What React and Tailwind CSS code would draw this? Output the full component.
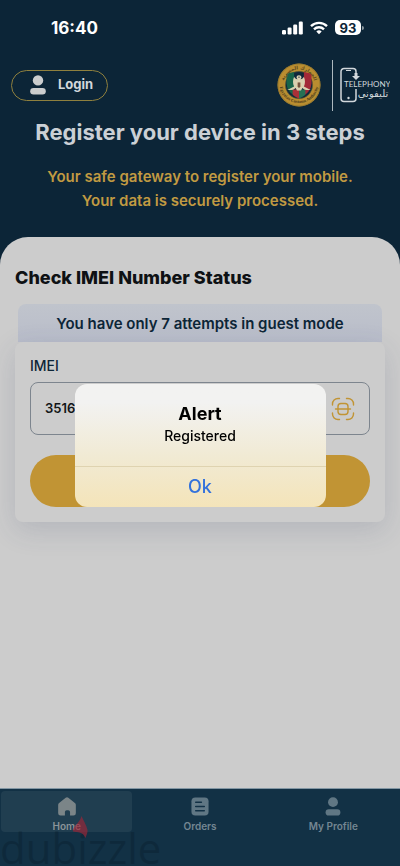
import React, { useState } from 'react';

const tabs = ['Home', 'Orders', 'My Profile'];

function PersonIcon({ className }) {
  return (
    <svg viewBox="0 0 16 20" className={className} fill="currentColor" aria-hidden="true">
      <circle cx="8" cy="5.4" r="5.2" />
      <rect x="0.2" y="13" width="15.6" height="6.6" rx="3.3" />
    </svg>
  );
}

function HomeIcon({ className }) {
  return (
    <svg viewBox="0 0 20 20" className={className} fill="currentColor" aria-hidden="true">
      <path d="M8.6 0.8a2.2 2.2 0 0 1 2.8 0l6.9 5.4c.6.5 1 1.2 1 2V17a2.5 2.5 0 0 1-2.5 2.5h-3.6v-3.7a1.9 1.9 0 0 0-1.9-1.9H9.7a1.9 1.9 0 0 0-1.9 1.9v3.7H3.2A2.5 2.5 0 0 1 .7 17V8.2c0-.8.4-1.5 1-2z" />
    </svg>
  );
}

function OrdersIcon({ className }) {
  return (
    <svg viewBox="0 0 20 20" className={className} aria-hidden="true">
      <rect x="1" y="0.5" width="18" height="19" rx="4" fill="currentColor" />
      <path d="M5.5 5.5h6M5.5 10h9M5.5 14.5h9" stroke="#123145" strokeWidth="1.6" strokeLinecap="round" />
    </svg>
  );
}

function ScanIcon() {
  return (
    <svg viewBox="0 0 24 24" className="size-6" fill="none" stroke="#c19434" strokeWidth="1.4" strokeLinecap="round" aria-hidden="true">
      <path d="M1.5 8V7A5.500 5.500 0 0 1 7 1.500h1.500M15.500 1.500H17A5.500 5.500 0 0 1 22.500 7v1M22.500 16v1a5.500 5.500 0 0 1-5.500 5.500h-1.500M8.500 22.500H7A5.500 5.500 0 0 1 1.500 17v-1" />
      <rect x="7" y="6.5" width="10" height="11" rx="3" />
      <path d="M4.5 12h15" />
    </svg>
  );
}

function Emblem() {
  return (
    <svg viewBox="0 0 90 90" className="size-11" role="img" aria-label="Egyptian Customs Authority">
      <defs>
        <path id="topArc" d="M13 45a32 32 0 0 1 64 0" />
        <path id="bottomArc" d="M5 42a40 40 0 0 0 80 0" />
        <clipPath id="shield">
          <path d="M19 22q26-8 52 0v20q-2 20-26 31Q21 62 19 42z" />
        </clipPath>
      </defs>
      <circle cx="45" cy="45" r="44" fill="#b98d30" />
      <circle cx="45" cy="45" r="43" fill="none" stroke="#8b732e" strokeWidth="1.5" />
      <circle cx="45" cy="45" r="28" fill="#10283b" stroke="#796a31" />
      <g clipPath="url(#shield)">
        <path d="M18 18h17v48H18z" fill="#176449" />
        <path d="M55 18h17v48H55z" fill="#a32938" />
        <path d="M32 54h13v22H32z" fill="#aa3038" />
        <path d="M45 54h13v22H45z" fill="#277154" />
      </g>
      <path d="M45 25c3 0 5 2 5 4s-1 3-2 4c4 0 6-3 7-5 3 7 3 14 0 20l14 7c-7 1-13 0-17-4l-3 5h-8l-3-5c-4 4-10 5-17 4l14-7c-3-6-3-13 0-20 1 2 3 5 7 5-1-1-2-2-2-4s2-4 5-4z" fill="#d9d0b0" />
      <path d="M42 40h6v8l-3 3-3-3z" fill="#9f6844" />
      <path d="M45 40v10M43 29h4" stroke="#26313a" strokeWidth="1.5" />
      <text fontSize="10" fontWeight="700" fill="#5e4b20" fontFamily="DejaVu Sans" textAnchor="middle">
        <textPath href="#topArc" startOffset="50%">الجمارك المصرية</textPath>
      </text>
      <text fontSize="9" fontWeight="700" fill="#493a1b" fontFamily="Liberation Serif" textAnchor="middle">
        <textPath href="#bottomArc" startOffset="50%">Egyptian Customs Authority</textPath>
      </text>
    </svg>
  );
}

function TelephonyLogo() {
  return (
    <svg viewBox="0 0 50 36" className="h-9 w-[50px]" fill="none" role="img" aria-label="Telephony">
      <g stroke="#d2d8dc" strokeWidth="1.5">
        <path d="M16 7V4.5A3 3 0 0 0 13 1.5H4A3 3 0 0 0 1 4.5v27a3 3 0 0 0 3 3h9a3 3 0 0 0 3-3V22" />
        <path d="M6 3.5h5" strokeWidth="1" />
      </g>
      <circle cx="8.5" cy="31" r="1.2" fill="#d2d8dc" />
      <path d="M14.5 6h3v3H20l-4 4-4-4h2.5z" fill="#d2d8dc" />
      <text x="4" y="20" fontSize="8" fill="#d2d8dc" fontFamily="Lato, sans-serif">TELEPHONY</text>
      <text x="33" y="30" fontSize="10" fill="#d2d8dc" fontFamily="DejaVu Sans, sans-serif" textAnchor="middle">تليفوني</text>
    </svg>
  );
}

function StatusBar() {
  return (
    <div className="flex h-14 items-center justify-between pr-9 pb-px pl-[51px] text-white">
      <span className="text-[17px] leading-6 font-bold">16:40</span>
      <div className="flex items-center gap-[7px]">
        <svg viewBox="0 0 21 14" className="h-3.5 w-[21px]" fill="currentColor" aria-hidden="true">
          <rect x="0" y="9" width="4" height="4.5" rx="1.2" />
          <rect x="5.6" y="6.5" width="4" height="7" rx="1.2" />
          <rect x="11.2" y="3.5" width="4" height="10" rx="1.2" />
          <rect x="16.8" y="0.5" width="4" height="13" rx="1.2" />
        </svg>
        <svg viewBox="0 0 18 14" className="h-3.5 w-[18px]" fill="none" stroke="currentColor" strokeWidth="2.4" aria-hidden="true">
          <path d="M1 5.1a11.5 11.5 0 0 1 16 0M4 8.3a7.2 7.2 0 0 1 10 0" />
          <path d="M6.3 10.5a4 4 0 0 1 5.4 0L9 13.3z" fill="currentColor" stroke="none" />
        </svg>
        <div className="flex items-center gap-px">
          <span className="flex h-[15px] w-[26px] items-center justify-center rounded-[5px] bg-white text-[13px] leading-4 font-bold text-[#0c2537]">93</span>
          <span className="h-1 w-0.5 rounded-r-full bg-[#8b989f]" />
        </div>
      </div>
    </div>
  );
}

function Alert({ onClose }) {
  return (
    <div className="fixed inset-0 flex items-center justify-center pt-6">
      <div role="alertdialog" aria-labelledby="alert-title" aria-describedby="alert-text" className="w-[251px] overflow-hidden rounded-xl bg-linear-to-b from-[#f2f2f1] from-15% via-[#f1ead3] via-60% to-[#f4e4b9] text-center text-black">
        <div className="flex h-[82px] flex-col items-center pt-[18px]">
          <h2 id="alert-title" className="text-[18px] leading-6 font-bold">Alert</h2>
          <p id="alert-text" className="text-[14px] leading-5 font-medium">Registered</p>
        </div>
        <button onClick={onClose} className="h-[41px] w-full border-t border-[#dfd3b0] text-[18px] leading-6 font-medium text-[#3372dc]">
          Ok
        </button>
      </div>
    </div>
  );
}

function App() {
  const [imei, setImei] = useState('3516');
  const [active, setActive] = useState('Home');
  const [showAlert, setShowAlert] = useState(true);

  return (
    <div className="relative flex min-h-screen flex-col overflow-hidden bg-[#0c2537] font-['Inter',sans-serif]">
      <StatusBar />

      <header className="flex flex-col">
        <div className="flex h-[58px] items-center justify-between pr-2.5 pl-[11px]">
          <button className="flex h-[31px] w-[97px] items-center justify-center gap-3 rounded-full border border-[#8f803e] pl-1 text-[13px] font-bold text-[#d2d8dc]">
            <PersonIcon className="h-5 w-4 text-[#cbcdce]" />
            Login
          </button>
          <div className="flex items-center gap-[11px]">
            <Emblem />
            <div className="flex items-center gap-[7px]">
              <span className="h-[51px] w-px bg-[#aeb9bf]" />
              <TelephonyLogo />
            </div>
          </div>
        </div>
        <h1 className="pt-1 text-center text-[22px] leading-7 font-bold text-[#cbd0d5]">Register your device in 3 steps</h1>
        <p className="pt-[19px] text-center text-[15px] leading-6 font-semibold text-[#c19a42]">
          Your safe gateway to register your mobile.
          <br />
          Your data is securely processed.
        </p>
      </header>

      <main className="mt-6 flex-1 rounded-t-[28px] bg-[#cccccc] px-[15px] pt-[27px]">
        <h2 className="text-[18px] leading-7 font-extrabold text-[#0e1114]">Check IMEI Number Status</h2>
        <p className="mx-[3px] mt-3 rounded-t-lg bg-linear-to-b from-[#c0c4cc] to-[#b9bdca] pt-2.5 pb-2 text-center text-[15px] leading-5 font-semibold text-[#0c2537]">
          You have only 7 attempts in guest mode
        </p>
        <form onSubmit={(e) => e.preventDefault()} className="rounded-lg bg-[#cccccc] px-[15px] pt-3 pb-[15px] shadow-[0_8px_28px_rgba(50,65,100,0.16)]">
          <label htmlFor="imei" className="block text-[14px] leading-6 font-medium text-[#0c2537]">IMEI</label>
          <div className="mt-1 flex h-[53px] items-center rounded-lg border border-[#7d858e] pr-3.5 pl-3.5">
            <input
              id="imei"
              value={imei}
              onChange={(e) => setImei(e.target.value)}
              className="min-w-0 flex-1 bg-transparent text-[13px] font-semibold text-[#111517] outline-none"
            />
            <button type="button" aria-label="Scan IMEI">
              <ScanIcon />
            </button>
          </div>
          <button type="submit" aria-label="Check" className="mt-5 block h-[52px] w-full rounded-full bg-[#c19434]" />
        </form>
      </main>

      <nav className="flex h-[78px] items-start border-t border-[#8296a3] bg-[#123145]">
        {tabs.map((tab) => (
          <button
            key={tab}
            onClick={() => setActive(tab)}
            className={`mx-px mt-0.5 flex h-[41px] flex-1 flex-col items-center rounded-sm pt-1.5 text-[10px] leading-3 font-semibold ${tab === active ? 'bg-[#203e50] text-[#8b9499]' : 'text-[#748692]'}`}
          >
            {tab === 'Home' && <HomeIcon className="size-5 text-[#7b8588]" />}
            {tab === 'Orders' && <OrdersIcon className="size-5 text-[#607784]" />}
            {tab === 'My Profile' && <PersonIcon className="h-5 w-4 text-[#607784]" />}
            <span className="mt-1">{tab}</span>
          </button>
        ))}
      </nav>

      <div className="pointer-events-none absolute bottom-0 left-0">
        <span className="block h-9 font-['Open_Sans',sans-serif] text-[42px] leading-9 font-medium text-[#0b2232]/50">dubizzle</span>
        <svg viewBox="0 0 16 22" className="absolute bottom-7 left-[72px] h-[22px] w-4" aria-hidden="true">
          <path d="M9.5 0c2 5 5 9 6 14 .4 2.5-1 5-2 8-1.5-3-3-5-6-5.5C4 16 0 16.5 1 13.5 2 10 8 6 9.5 0z" fill="#a02535" opacity="0.65" />
        </svg>
      </div>

      {showAlert && <Alert onClose={() => setShowAlert(false)} />}
    </div>
  );
}

export default App;
